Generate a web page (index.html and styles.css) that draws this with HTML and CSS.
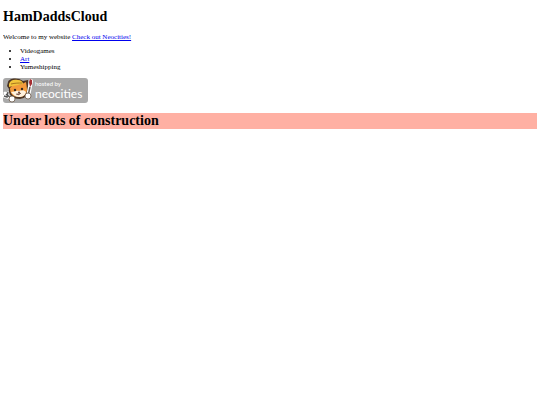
FILE: index.html
```html
<!DOCTYPE html>
<html lang="en">
<head>
  <meta charset="UTF-8">
  <meta name="viewport" content="width=device-width, initial-scale=1.0">
  <title>HamDaddsCloud</title>
  <link rel="stylesheet" href="styles.css">
</head>
<body>

<h1>HamDaddsCloud</h1>
<p>Welcome to my website <a href="https://neocities.org">Check out Neocities!</a></p>

<ul>
  <li>Videogames</li>
  <li><a href="art.html">Art</a></li>
  <li>Yumeshipping</li>
</ul>

<a class="badge" href="https://neocities.org" aria-label="hosted by neocities">
  <svg width="85" height="26" viewBox="0 0 85 26">
    <rect x="0" y="0" width="85" height="25" rx="3" fill="#a9a9a9"/>
    <!-- fork arm -->
    <path d="M2 15L8 21M1 18l3 1 1-4" fill="none" stroke="#fff" stroke-width="3" stroke-linecap="round"/>
    <path d="M3 16L9 21M1 18l3 1 1-5" fill="none" stroke="#555" stroke-width="1.5"/>
    <!-- cat head and beret -->
    <path d="M5 4C6 0 15-1 20 3l5-1v8c2 5-1 10-8 11C10 21 5 17 6 11L4 8z" fill="#4d3524"/>
    <path d="M7 10l3-3 9-1 4-2 1 7c0 5-3 8-8 8-6 0-9-3-9-9z" fill="#f39a3c"/>
    <path d="M6 6C7 2 11 1 15 2c3 0 5 2 5 4L10 8 6 9z" fill="#f2c43b"/>
    <path d="M8 6c4-1 8-1 11-1" fill="none" stroke="#a87620"/>
    <path d="M8 14c3 0 5-2 8-1 3-1 5-1 7 1-1 4-4 5-7 5s-6-2-8-5z" fill="#fff2de"/>
    <circle cx="12" cy="12" r="1.2" fill="#38281f"/>
    <circle cx="19" cy="11" r="1.2" fill="#38281f"/>
    <path d="M15 14h2l-1 1zM13 16q3 2 5-1" fill="#63392b" stroke="#63392b" stroke-width=".6"/>
    <!-- brush arm -->
    <path d="M28 3L25 19" fill="none" stroke="#fff" stroke-width="4" stroke-linecap="round"/>
    <path d="M27 9L25 18" fill="none" stroke="#63594f" stroke-width="1.5"/>
    <path d="M26 4l1-3 2 1v4l-2 3z" fill="#a52d31"/>
    <g fill="#fff" stroke="#695746" stroke-width=".8">
      <circle cx="9" cy="21" r="3"/>
      <circle cx="25" cy="18" r="3"/>
    </g>
    <text class="badge-small" x="32" y="8">hosted by</text>
    <text class="badge-name" x="32" y="20">neocities</text>
  </svg>
</a>

<h1 class="construction">Under lots of construction</h1>

</body>
</html>
```
FILE: styles.css
```css
body {
  margin: 9px 3px;
  background: #fff;
  color: #000;
  font-family: "Liberation Serif", "Times New Roman", serif;
  font-size: 7px;
  line-height: 8px;
}

h1 {
  margin: 0 0 8px;
  font-size: 14px;
  line-height: 16px;
}

p {
  margin: 0 0 6px;
}

ul {
  margin: 0 0 7px;
  padding-left: 17px;
}

a {
  color: #0000ee;
}

.badge {
  display: block;
  width: 85px;
  margin-bottom: 9px;
}

.badge svg {
  display: block;
}

.badge text {
  fill: #fff;
  font-family: Lato, "Open Sans", sans-serif;
}

.badge-small {
  font-size: 6px;
}

.badge-name {
  font-size: 12px;
}

.construction {
  margin: 0;
  background: #ffb0a3;
}
```
